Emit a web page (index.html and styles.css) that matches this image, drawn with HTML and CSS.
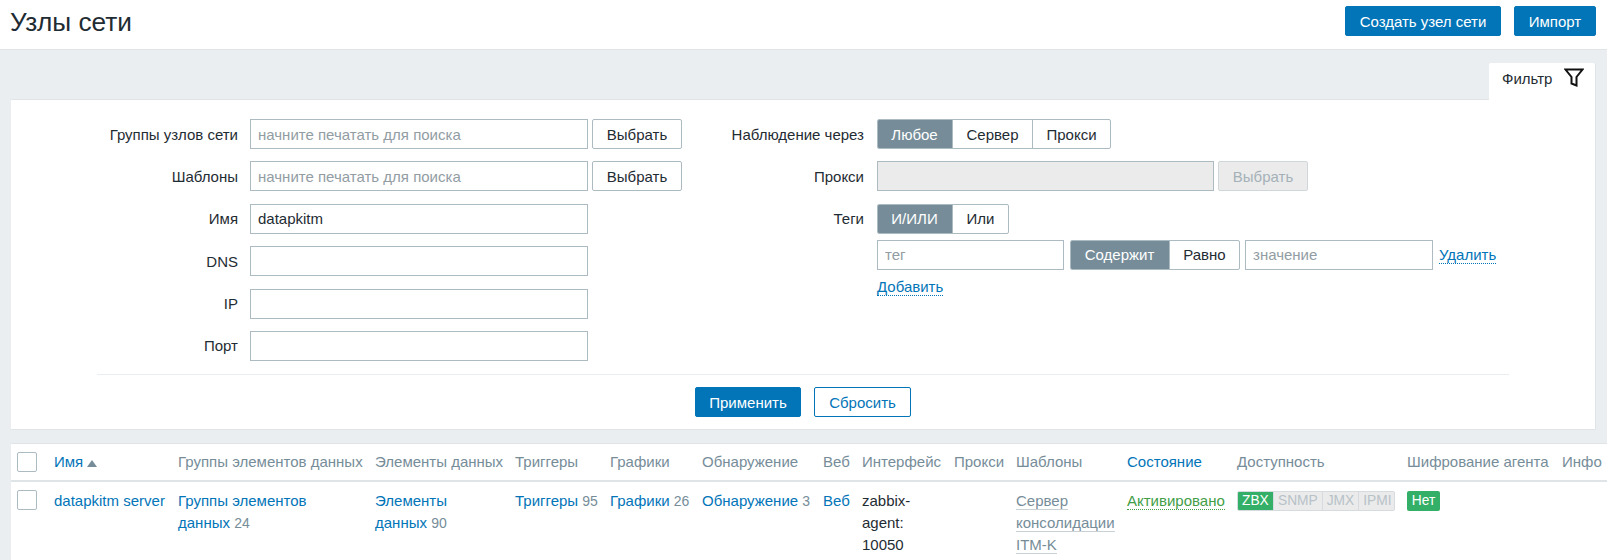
FILE: index.html
```html
<!DOCTYPE html>
<html lang="ru">

<head>
    <meta charset="UTF-8">
    <title>Узлы сети</title>
    <link rel="stylesheet" href="styles.css">
</head>

<body>
    <header class="page-header">
        <h1>Узлы сети</h1>
        <div class="header-actions">
            <button class="btn btn-create">Создать узел сети</button>
            <button class="btn btn-import">Импорт</button>
        </div>
    </header>

    <main class="content">
        <div class="tabs">
            <div class="filter-tab">
                <span>Фильтр</span>
                <svg width="20" height="20" viewBox="0 0 20 20">
                    <path d="M1.5 1.5H18.5L12.5 9V17.5L7.5 15.5V9Z" fill="none" stroke="#111" stroke-width="2" />
                </svg>
            </div>
        </div>

        <section class="filter">
            <div class="filter-columns">
                <div class="filter-col left">
                    <div class="row">
                        <label>Группы узлов сети</label>
                        <input class="input wide" placeholder="начните печатать для поиска">
                        <button class="btn-alt">Выбрать</button>
                    </div>
                    <div class="row">
                        <label>Шаблоны</label>
                        <input class="input wide" placeholder="начните печатать для поиска">
                        <button class="btn-alt">Выбрать</button>
                    </div>
                    <div class="row">
                        <label>Имя</label>
                        <input class="input wide" value="datapkitm">
                    </div>
                    <div class="row">
                        <label>DNS</label>
                        <input class="input wide">
                    </div>
                    <div class="row">
                        <label>IP</label>
                        <input class="input wide">
                    </div>
                    <div class="row">
                        <label>Порт</label>
                        <input class="input wide">
                    </div>
                </div>

                <div class="filter-col right">
                    <div class="row">
                        <label>Наблюдение через</label>
                        <div class="seg">
                            <span class="on seg-first">Любое</span>
                            <span class="seg-server">Сервер</span>
                            <span class="seg-proxy">Прокси</span>
                        </div>
                    </div>
                    <div class="row">
                        <label>Прокси</label>
                        <input class="input proxy" disabled>
                        <button class="btn-alt" disabled>Выбрать</button>
                    </div>
                    <div class="row">
                        <label>Теги</label>
                        <div class="seg">
                            <span class="on seg-first">И/ИЛИ</span>
                            <span class="seg-or">Или</span>
                        </div>
                    </div>
                    <div class="tag-row">
                        <input class="input tag" placeholder="тег">
                        <div class="seg">
                            <span class="on seg-contains">Содержит</span>
                            <span class="seg-equals">Равно</span>
                        </div>
                        <input class="input tag-value" placeholder="значение">
                        <a class="link-dotted">Удалить</a>
                    </div>
                    <div class="add-row">
                        <a class="link-dotted">Добавить</a>
                    </div>
                </div>
            </div>

            <div class="filter-buttons">
                <button class="btn btn-apply">Применить</button>
                <button class="btn-outline">Сбросить</button>
            </div>
        </section>

        <table class="hosts">
            <colgroup>
                <col class="c-check">
                <col class="c-name">
                <col class="c-groups">
                <col class="c-items">
                <col class="c-triggers">
                <col class="c-graphs">
                <col class="c-discovery">
                <col class="c-web">
                <col class="c-iface">
                <col class="c-proxy">
                <col class="c-templates">
                <col class="c-status">
                <col class="c-avail">
                <col class="c-encrypt">
                <col class="c-info">
            </colgroup>
            <thead>
                <tr>
                    <th><span class="checkbox"></span></th>
                    <th><a>Имя</a><span class="sort-up"></span></th>
                    <th>Группы элементов данных</th>
                    <th>Элементы данных</th>
                    <th>Триггеры</th>
                    <th>Графики</th>
                    <th>Обнаружение</th>
                    <th>Веб</th>
                    <th>Интерфейс</th>
                    <th>Прокси</th>
                    <th>Шаблоны</th>
                    <th><a>Состояние</a></th>
                    <th>Доступность</th>
                    <th>Шифрование агента</th>
                    <th>Инфо</th>
                </tr>
            </thead>
            <tbody>
                <tr>
                    <td><span class="checkbox"></span></td>
                    <td><a>datapkitm server</a></td>
                    <td><a>Группы элементов<br>данных</a> <sup>24</sup></td>
                    <td><a>Элементы<br>данных</a> <sup>90</sup></td>
                    <td><a>Триггеры</a> <sup>95</sup></td>
                    <td><a>Графики</a> <sup>26</sup></td>
                    <td><a>Обнаружение</a> <sup>3</sup></td>
                    <td><a>Веб</a></td>
                    <td>zabbix-agent: 10050</td>
                    <td></td>
                    <td><a class="template">Сервер</a> <a class="template">консолидации</a> <a class="template">ITM-K</a></td>
                    <td><a class="status-on">Активировано</a></td>
                    <td>
                        <div class="avail">
                            <span class="ok">ZBX</span><span>SNMP</span><span>JMX</span><span>IPMI</span>
                        </div>
                    </td>
                    <td><span class="badge-no">Нет</span></td>
                    <td></td>
                </tr>
            </tbody>
        </table>
    </main>
</body>

</html>
```

FILE: styles.css
```css
* {
    box-sizing: border-box;
}

html,
body {
    height: 560px;
    overflow: hidden;
}

body {
    margin: 0;
    font-family: "Liberation Sans", Arial, sans-serif;
    font-size: 15px;
    color: #1f2c33;
    background-color: #ebeef0;
}

a {
    color: #0275b8;
}

button,
input {
    font-family: inherit;
    font-size: 15px;
}

/* header */
.page-header {
    display: flex;
    justify-content: space-between;
    align-items: flex-start;
    height: 50px;
    padding: 6px 11px 0 10px;
    background-color: #ffffff;
    border-bottom: 1px solid #dfe4e7;
}

h1 {
    margin: 0;
    font-size: 26.25px;
    font-weight: normal;
    line-height: 32px;
    color: #1f2c33;
}

.header-actions {
    display: flex;
    gap: 13px;
}

.btn {
    height: 30px;
    padding: 0;
    color: #ffffff;
    background-color: #0275b8;
    border: 1px solid #0275b8;
    border-radius: 2px;
}

.btn-create {
    width: 156px;
}

.btn-import {
    width: 82px;
}

/* filter */
.content {
    padding: 13px 0 0 11px;
}

.tabs {
    display: flex;
    justify-content: flex-end;
    height: 36px;
    margin-right: 11px;
}

.filter-tab {
    position: relative;
    display: flex;
    align-items: flex-start;
    gap: 12px;
    width: 107px;
    height: 37px;
    padding: 7px 0 0 13px;
    background-color: #ffffff;
    border-right: 1px solid #dfe4e7;
    border-radius: 2px 2px 0 0;
}

.filter-tab svg {
    margin-top: -2px;
}

.filter {
    height: 331px;
    margin-right: 11px;
    background-color: #ffffff;
    border: 1px solid #dfe4e7;
    border-left: 0;
}

.filter-columns {
    display: flex;
    height: 274px;
    padding-top: 19px;
}

.left {
    width: 709px;
}

.right {
    width: 800px;
}

.row {
    display: flex;
    align-items: center;
    height: 30px;
    margin-bottom: 12.4px;
}

.row label {
    flex: none;
    text-align: right;
    white-space: nowrap;
}

.left label {
    width: 227px;
    margin-right: 12px;
}

.right label {
    width: 144px;
    margin-right: 13px;
}

.input {
    height: 30px;
    padding: 0 7px;
    color: #1f2c33;
    background-color: #ffffff;
    border: 1px solid #acbbc2;
    outline: none;
}

.input::placeholder {
    color: #929da3;
    opacity: 1;
}

.input:disabled {
    background-color: #ebebeb;
}

.wide {
    width: 338px;
}

.proxy {
    width: 337px;
}

.btn-alt {
    width: 90px;
    height: 30px;
    margin-left: 4px;
    padding: 0;
    color: #1f2c33;
    background-color: #ffffff;
    border: 1px solid #acbbc2;
    border-radius: 2px;
}

.btn-alt:disabled {
    color: #a5b1b8;
    background-color: #ebebeb;
    border-color: #d0d7db;
}

.seg {
    display: flex;
    height: 30px;
    overflow: hidden;
    background-color: #ffffff;
    border: 1px solid #acbbc2;
    border-radius: 2px;
}

.seg span {
    display: flex;
    justify-content: center;
    align-items: center;
    border-left: 1px solid #acbbc2;
}

.seg span:first-child {
    border-left: 0;
}

.seg .on {
    margin: -1px 0 -1px -1px;
    color: #ffffff;
    background-color: #768d99;
}

.seg-first {
    width: 75px;
}

.seg-server {
    width: 80px;
}

.seg-proxy {
    width: 78px;
}

.seg-or {
    width: 56px;
}

.seg-contains {
    width: 99px;
}

.seg-equals {
    width: 70px;
}

.tag-row {
    display: flex;
    align-items: center;
    height: 30px;
    margin-top: -6.4px;
    padding-left: 157px;
}

.tag {
    width: 187px;
    margin-right: 6px;
}

.tag-value {
    width: 188px;
    margin: 0 6px 0 5px;
}

.link-dotted {
    color: #0275b8;
    border-bottom: 1px dotted #0275b8;
    line-height: 17px;
}

.add-row {
    margin-top: 8px;
    padding-left: 157px;
}

.filter-buttons {
    display: flex;
    justify-content: center;
    gap: 13px;
    height: 55px;
    margin: 0 86px;
    padding-top: 12px;
    border-top: 1px solid #ebeef0;
}

.btn-apply {
    width: 106px;
}

.btn-outline {
    width: 97px;
    height: 30px;
    padding: 0;
    color: #0275b8;
    background-color: #ffffff;
    border: 1px solid #0275b8;
    border-radius: 2px;
}

/* hosts table */
.hosts {
    width: 1596px;
    margin-top: 13px;
    table-layout: fixed;
    border-collapse: collapse;
    background-color: #ffffff;
    border-top: 1px solid #dfe4e7;
}

.c-check { width: 37px; }
.c-name { width: 124px; }
.c-groups { width: 197px; }
.c-items { width: 140px; }
.c-triggers { width: 95px; }
.c-graphs { width: 92px; }
.c-discovery { width: 121px; }
.c-web { width: 39px; }
.c-iface { width: 92px; }
.c-proxy { width: 62px; }
.c-templates { width: 111px; }
.c-status { width: 110px; }
.c-avail { width: 170px; }
.c-encrypt { width: 155px; }
.c-info { width: 51px; }

.hosts th {
    height: 37px;
    padding: 0 5px 0 6px;
    font-weight: normal;
    text-align: left;
    white-space: nowrap;
    color: #768d99;
    border-bottom: 2px solid #dfe4e7;
}

.hosts td {
    height: 90px;
    padding: 8px 5px 0 6px;
    line-height: 22px;
    vertical-align: top;
}

.checkbox {
    display: block;
    width: 20px;
    height: 20px;
    background-color: #ffffff;
    border: 1px solid #acbbc2;
    border-radius: 2px;
}

.sort-up {
    display: inline-block;
    margin-left: 4px;
    border-left: 5px solid transparent;
    border-right: 5px solid transparent;
    border-bottom: 7px solid #768d99;
}

sup {
    font-size: 14px;
    vertical-align: baseline;
    color: #768d99;
}

.template {
    color: #768d99;
    border-bottom: 1px solid #c8d1d6;
}

.status-on {
    color: #429e47;
    border-bottom: 1px dotted #429e47;
}

.avail {
    display: flex;
    width: 158px;
    height: 20px;
    margin-top: 1px;
    overflow: hidden;
    font-size: 13.75px;
    line-height: 18px;
    background-color: #ebebeb;
    border: 1px solid #d5dbde;
    border-radius: 2px;
}

.avail span {
    flex: none;
    padding: 0 4px;
    color: #b7c2c8;
    border-left: 1px solid #d5dbde;
}

.avail .ok {
    width: 36px;
    margin: -1px 0 -1px -1px;
    padding: 1px 0 1px 5px;
    color: #ffffff;
    background-color: #34af67;
    border-left: 0;
}

.badge-no {
    display: block;
    width: 33px;
    height: 20px;
    margin-top: 1px;
    font-size: 13.75px;
    line-height: 20px;
    text-align: center;
    color: #ffffff;
    background-color: #34af67;
    border-radius: 2px;
}
```
